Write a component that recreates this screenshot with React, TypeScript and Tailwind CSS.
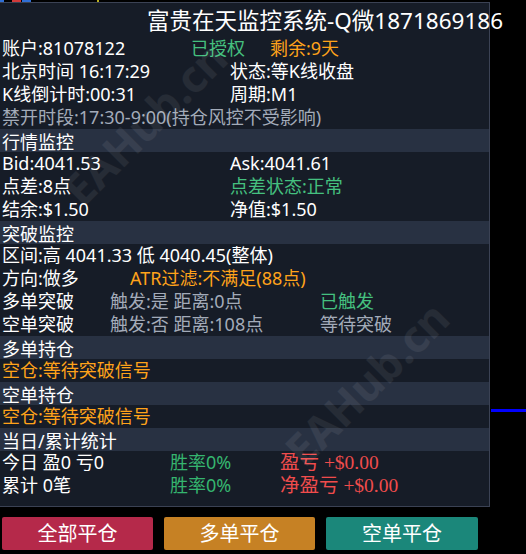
const font = { fontFamily: '"Noto Sans", "Noto Sans CJK SC", sans-serif' }
const serif = { fontFamily: '"Liberation Serif", "Noto Sans CJK SC", serif' }

function Row({ children, className = '' }: { children: React.ReactNode; className?: string }) {
  return <div className={`flex h-[23px] items-center whitespace-nowrap pl-[2px] leading-[23px] ${className}`}>{children}</div>
}

function Header({ title }: { title: string }) {
  return (
    <div className="h-[23px] bg-[#283142] pl-[2px] pt-[2px] leading-[23px] text-white whitespace-nowrap">{title}</div>
  )
}

export default function App() {
  return (
    <div className="relative h-[554px] w-[526px] overflow-hidden bg-black text-[18px] text-white" style={font}>
      {/* chart remnants behind the panel */}
      <div className="flex h-[2px]">
        <div className="w-[4px] bg-[#2f6fd6]" />
        <div className="ml-[8px] w-[9px] bg-[#d03a3a]" />
        <div className="ml-[1px] w-[9px] bg-[#2f6fd6]" />
        <div className="ml-[66px] w-[2px] bg-[#b8b020]" />
      </div>

      <div className="w-[490px] border-t border-r border-b border-[#3b4254] bg-[#161c27]">
        <div className="h-[34px] whitespace-nowrap pl-[147px] pt-[3px] text-[22.5px] leading-[30px]">
          富贵在天监控系统-Q微1871869186
        </div>
        <Row>
          <span className="w-[189px]">账户:81078122</span>
          <span className="w-[79px] text-[#45c07f]">已授权</span>
          <span className="text-[#ffa31a]">剩余:9天</span>
        </Row>
        <Row>
          <span className="w-[228px]">北京时间 16:17:29</span>
          <span>状态:等K线收盘</span>
        </Row>
        <Row>
          <span className="w-[228px]">K线倒计时:00:31</span>
          <span>周期:M1</span>
        </Row>
        <Row className="text-[#a3abb9]">禁开时段:17:30-9:00(持仓风控不受影响)</Row>

        <Header title="行情监控" />
        <Row>
          <span className="w-[228px]">Bid:4041.53</span>
          <span>Ask:4041.61</span>
        </Row>
        <Row>
          <span className="w-[228px]">点差:8点</span>
          <span className="text-[#45c07f]">点差状态:正常</span>
        </Row>
        <Row>
          <span className="w-[228px]">结余:$1.50</span>
          <span>净值:$1.50</span>
        </Row>

        <Header title="突破监控" />
        <Row>区间:高 4041.33 低 4040.45(整体)</Row>
        <Row>
          <span className="w-[128px]">方向:做多</span>
          <span className="text-[#ffa31a]">ATR过滤:不满足(88点)</span>
        </Row>
        <Row>
          <span className="w-[108px]">多单突破</span>
          <span className="w-[210px] text-[#a3abb9]">触发:是 距离:0点</span>
          <span className="text-[#45c07f]">已触发</span>
        </Row>
        <Row>
          <span className="w-[108px]">空单突破</span>
          <span className="w-[210px] text-[#a3abb9]">触发:否 距离:108点</span>
          <span className="text-[#a3abb9]">等待突破</span>
        </Row>

        <Header title="多单持仓" />
        <Row className="text-[#ffa31a]">空仓:等待突破信号</Row>

        <Header title="空单持仓" />
        <Row className="text-[#ffa31a]">空仓:等待突破信号</Row>

        <Header title="当日/累计统计" />
        <div className="pb-[9px]">
          <Row>
            <span className="w-[168px]">今日 盈0 亏0</span>
            <span className="w-[110px] text-[#35b56f]">胜率0%</span>
            <span className="text-[19.5px] text-[#f04c4c]" style={serif}>
              盈亏 +$0.00
            </span>
          </Row>
          <Row>
            <span className="w-[168px]">累计 0笔</span>
            <span className="w-[110px] text-[#35b56f]">胜率0%</span>
            <span className="text-[19.5px] text-[#f04c4c]" style={serif}>
              净盈亏 +$0.00
            </span>
          </Row>
        </div>
      </div>

      <div className="mt-[10px] flex gap-[11px] pl-[2px]">
        <button className="h-[33px] w-[151px] rounded-[2px] bg-[#b5294a] text-[20px] text-white">全部平仓</button>
        <button className="h-[33px] w-[151px] rounded-[2px] bg-[#c68124] text-[20px] text-white">多单平仓</button>
        <button className="h-[33px] w-[152px] rounded-[2px] bg-[#1b877a] text-[20px] text-white">空单平仓</button>
      </div>

      {/* chart line to the right of the panel */}
      <div className="absolute left-[491px] top-[409px] h-[3px] w-[35px] bg-[#0000ff]" />

      {/* watermarks */}
      <div className="pointer-events-none absolute left-[40px] top-[90px] -rotate-[45deg] text-[44px] font-bold text-white/[0.07]">
        EAHub.cn
      </div>
      <div className="pointer-events-none absolute left-[262px] top-[350px] -rotate-[45deg] text-[44px] font-bold text-white/[0.07]">
        EAHub.cn
      </div>
    </div>
  )
}
